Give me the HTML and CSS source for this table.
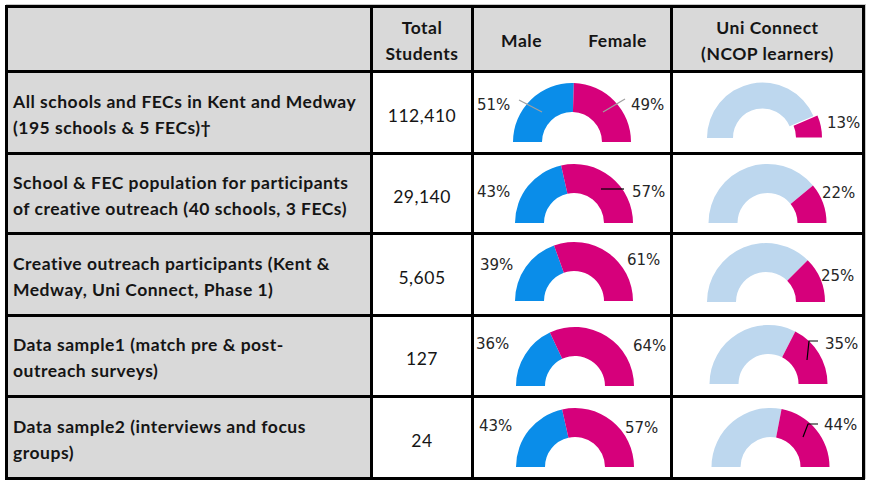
FILE: index.html
```html
<!DOCTYPE html>
<html lang="en">
<head>
<meta charset="utf-8">
<title>Creative outreach participants</title>
<link rel="stylesheet" href="styles.css">
</head>
<body>
<div class="grid">
  <div class="cell head"></div>
  <div class="cell head center"><span>Total<br>Students</span></div>
  <div class="cell head split"><span>Male</span><span>Female</span></div>
  <div class="cell head center"><span>Uni Connect<br>(NCOP learners)</span></div>

  <div class="cell label r1"><span>All schools and FECs in Kent and Medway<br>(195 schools &amp; 5 FECs)†</span></div>
  <div class="cell num r1">112,410</div>
  <div class="cell chart r1">
    <svg width="196" height="79" viewBox="0 0 196 79">
      <path class="blue" d="M39 69 A59 59 0 0 1 99.85 10.03 L98.94 39.02 A30 30 0 0 0 68 69 Z"/>
      <path class="mag" d="M99.85 10.03 A59 59 0 0 1 157 69 L128 69 A30 30 0 0 0 98.94 39.02 Z"/>
      <line class="lead-gray" x1="45" y1="27" x2="68" y2="39"/>
      <line class="lead-gray" x1="151" y1="26" x2="129" y2="39"/>
      <text x="3" y="37">51%</text>
      <text x="157" y="37">49%</text>
    </svg>
  </div>
  <div class="cell chart r1">
    <svg width="189" height="79" viewBox="0 0 189 79">
      <path class="light" d="M34 65 A55.5 55.5 0 0 1 140.44 42.96 L116.58 53.29 A29.5 29.5 0 0 0 60 65 Z"/>
      <path class="mag" transform="translate(4 -0.5)" d="M140.44 42.96 A55.5 55.5 0 0 1 145 65 L119 65 A29.5 29.5 0 0 0 116.58 53.29 Z"/>
      <text x="154" y="55">13%</text>
    </svg>
  </div>

  <div class="cell label r2"><span>School &amp; FEC population for participants<br>of creative outreach (40 schools, 3 FECs)</span></div>
  <div class="cell num r2">29,140</div>
  <div class="cell chart r2">
    <svg width="196" height="77" viewBox="0 0 196 77">
      <path class="blue" d="M41 68 A59 59 0 0 1 87.13 10.42 L93.46 38.72 A30 30 0 0 0 70 68 Z"/>
      <path class="mag" d="M87.13 10.42 A59 59 0 0 1 159 68 L130 68 A30 30 0 0 0 93.46 38.72 Z"/>
      <line class="lead-black" x1="127" y1="34" x2="150" y2="34"/>
      <text x="3" y="42">43%</text>
      <text x="158" y="42">57%</text>
    </svg>
  </div>
  <div class="cell chart r2">
    <svg width="189" height="77" viewBox="0 0 189 77">
      <path class="light" d="M35.5 68 A59 59 0 0 1 139.96 30.39 L117.62 48.88 A30 30 0 0 0 64.5 68 Z"/>
      <path class="mag" d="M139.96 30.39 A59 59 0 0 1 153.5 68 L124.5 68 A30 30 0 0 0 117.62 48.88 Z"/>
      <text x="149" y="43">22%</text>
    </svg>
  </div>

  <div class="cell label r3"><span>Creative outreach participants (Kent &amp;<br>Medway, Uni Connect, Phase 1)</span></div>
  <div class="cell num r3">5,605</div>
  <div class="cell chart r3">
    <svg width="196" height="79" viewBox="0 0 196 79">
      <path class="blue" d="M41 66 A59 59 0 0 1 80.02 10.49 L89.84 37.77 A30 30 0 0 0 70 66 Z"/>
      <path class="mag" d="M80.02 10.49 A59 59 0 0 1 159 66 L130 66 A30 30 0 0 0 89.84 37.77 Z"/>
      <text x="6" y="35">39%</text>
      <text x="153" y="30">61%</text>
    </svg>
  </div>
  <div class="cell chart r3">
    <svg width="189" height="79" viewBox="0 0 189 79">
      <path class="light" d="M34 67 A59 59 0 0 1 134.72 25.28 L114.21 45.79 A30 30 0 0 0 63 67 Z"/>
      <path class="mag" d="M134.72 25.28 A59 59 0 0 1 152 67 L123 67 A30 30 0 0 0 114.21 45.79 Z"/>
      <text x="148" y="46">25%</text>
    </svg>
  </div>

  <div class="cell label r4"><span>Data sample1 (match pre &amp; post-<br>outreach surveys)</span></div>
  <div class="cell num r4">127</div>
  <div class="cell chart r4">
    <svg width="196" height="78" viewBox="0 0 196 78">
      <path class="blue" d="M42 69 A59 59 0 0 1 75.88 15.62 L88.23 41.86 A30 30 0 0 0 71 69 Z"/>
      <path class="mag" d="M75.88 15.62 A59 59 0 0 1 160 69 L131 69 A30 30 0 0 0 88.23 41.86 Z"/>
      <text x="2" y="32">36%</text>
      <text x="159" y="34">64%</text>
    </svg>
  </div>
  <div class="cell chart r4">
    <svg width="189" height="78" viewBox="0 0 189 78">
      <path class="light" d="M36.5 67 A59 59 0 0 1 122.29 14.43 L109.12 40.27 A30 30 0 0 0 65.5 67 Z"/>
      <path class="mag" d="M122.29 14.43 A59 59 0 0 1 154.5 67 L125.5 67 A30 30 0 0 0 109.12 40.27 Z"/>
      <polyline class="lead-black" points="134,43 136,24 145,24"/>
      <text x="152" y="32">35%</text>
    </svg>
  </div>

  <div class="cell label r5"><span>Data sample2 (interviews and focus<br>groups)</span></div>
  <div class="cell num r5">24</div>
  <div class="cell chart r5">
    <svg width="196" height="79" viewBox="0 0 196 79">
      <path class="blue" d="M42 69 A59 59 0 0 1 88.13 11.42 L94.46 39.72 A30 30 0 0 0 71 69 Z"/>
      <path class="mag" d="M88.13 11.42 A59 59 0 0 1 160 69 L131 69 A30 30 0 0 0 94.46 39.72 Z"/>
      <text x="5" y="33">43%</text>
      <text x="151" y="35">57%</text>
    </svg>
  </div>
  <div class="cell chart r5">
    <svg width="189" height="79" viewBox="0 0 189 79">
      <path class="light" d="M38.5 69 A59 59 0 0 1 108.56 11.04 L103.12 39.53 A30 30 0 0 0 67.5 69 Z"/>
      <path class="mag" d="M108.56 11.04 A59 59 0 0 1 156.5 69 L127.5 69 A30 30 0 0 0 103.12 39.53 Z"/>
      <polyline class="lead-black" points="130,39 135,26 145,26"/>
      <text x="151" y="32">44%</text>
    </svg>
  </div>
</div>
</body>
</html>
```

FILE: styles.css
```css
html, body {
  margin: 0;
  padding: 0;
  background: #ffffff;
}

body {
  padding: 5px 0 0 5px;
  font-family: Lato, "Liberation Sans", sans-serif;
  color: #151515;
}

.grid {
  display: grid;
  width: 860px;
  box-sizing: border-box;
  grid-template-columns: 362px 98px 196px 189px;
  grid-template-rows: 62px 79px 77px 79px 78px 79px;
  gap: 3px;
  padding: 3px;
  background: #000000;
  box-shadow: 1px -1px 0 #c8c8c8;
}

.cell {
  background: #ffffff;
  display: flex;
  align-items: center;
  overflow: hidden;
}

.head {
  background: #d9d9d9;
  font-weight: 700;
  font-size: 17.5px;
  letter-spacing: 0.5px;
  line-height: 26px;
  padding-top: 3px;
}

.center {
  justify-content: center;
  text-align: center;
}

.split {
  justify-content: space-around;
  padding-left: 4px;
  padding-top: 4px;
}

.label {
  background: #d9d9d9;
  font-weight: 700;
  font-size: 17.5px;
  letter-spacing: 0.5px;
  line-height: 26px;
  padding: 4px 0 0 5px;
  white-space: nowrap;
}

.num {
  justify-content: center;
  font-size: 17.5px;
  letter-spacing: 0.5px;
  padding-top: 5px;
}

.chart {
  align-items: flex-start;
}

.chart svg {
  display: block;
}

.chart text {
  font-family: "DejaVu Sans", sans-serif;
  font-size: 15px;
  fill: #262626;
}

.blue { fill: #0a8de9; }
.mag { fill: #d6007b; }
.light { fill: #bdd7ee; }

.lead-gray {
  stroke: #a0a0a0;
  stroke-width: 1.2;
}

.lead-black {
  stroke: #000000;
  stroke-width: 1.2;
  fill: none;
}
```
